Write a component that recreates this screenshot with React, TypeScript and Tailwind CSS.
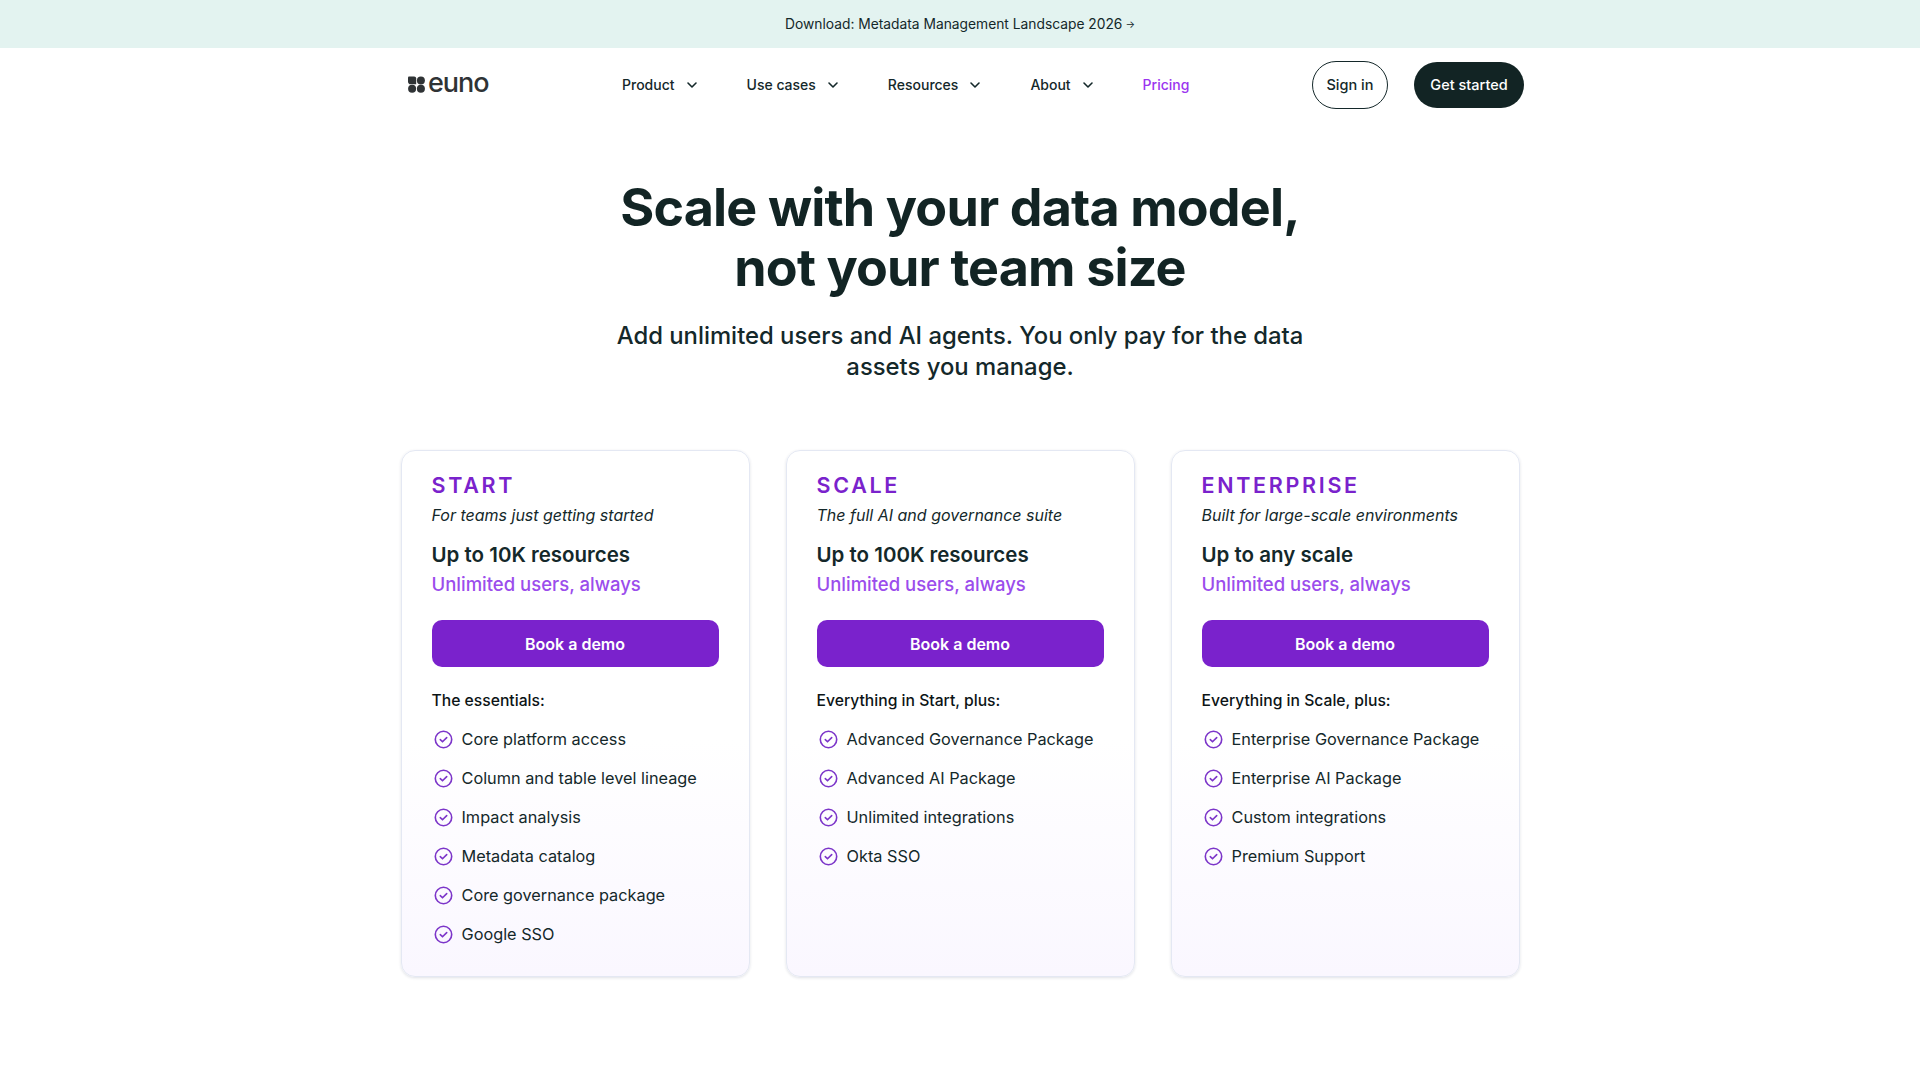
import { ChevronDown } from "lucide-react";

type Plan = {
  name: string;
  tagline: string;
  scale: string;
  intro: string;
  features: string[];
};

const plans: Plan[] = [
  {
    name: "START",
    tagline: "For teams just getting started",
    scale: "Up to 10K resources",
    intro: "The essentials:",
    features: [
      "Core platform access",
      "Column and table level lineage",
      "Impact analysis",
      "Metadata catalog",
      "Core governance package",
      "Google SSO",
    ],
  },
  {
    name: "SCALE",
    tagline: "The full AI and governance suite",
    scale: "Up to 100K resources",
    intro: "Everything in Start, plus:",
    features: ["Advanced Governance Package", "Advanced AI Package", "Unlimited integrations", "Okta SSO"],
  },
  {
    name: "ENTERPRISE",
    tagline: "Built for large-scale environments",
    scale: "Up to any scale",
    intro: "Everything in Scale, plus:",
    features: ["Enterprise Governance Package", "Enterprise AI Package", "Custom integrations", "Premium Support"],
  },
];

const navItems = ["Product", "Use cases", "Resources", "About"];

function CheckIcon() {
  return (
    <svg width="19" height="19" viewBox="0 0 19 19" fill="none" className="-mt-[1px] shrink-0">
      <circle cx="9.5" cy="9.5" r="8.2" stroke="#7c35c9" strokeWidth="1.6" />
      <path d="M6.3 9.6l2.2 2.2 4.2-4.2" stroke="#7c35c9" strokeWidth="1.6" strokeLinecap="round" strokeLinejoin="round" />
    </svg>
  );
}

function Logo() {
  return (
    <div className="flex items-center gap-[3px] text-[#2f3335]">
      <svg width="17" height="17" viewBox="0 0 17 17" fill="currentColor">
        <path d="M1 0h5.2a2 2 0 0 1 2 2v5.8H2.8A2.8 2.8 0 0 1 0 5V1a1 1 0 0 1 1-1z" transform="translate(0 .4)" />
        <circle cx="12.9" cy="4.4" r="4" />
        <circle cx="4.1" cy="12.8" r="4" />
        <circle cx="12.9" cy="12.8" r="4" />
      </svg>
      <span className="-mt-[4px] text-[27px] leading-none font-medium tracking-[-1px]">euno</span>
    </div>
  );
}

function PlanCard({ plan }: { plan: Plan }) {
  return (
    <div className="h-[527px] w-[349px] rounded-[14px] border border-[#e4e8f3] bg-gradient-to-b from-white from-55% to-[#faf7ff] px-[30px] pt-[20px] shadow-[0_1px_3px_rgba(30,40,80,0.14)]">
      <p className="text-[21.5px] leading-[28px] font-semibold tracking-[0.125em] text-[#7a22cc]">{plan.name}</p>
      <p className="mt-[3px] text-[16px] leading-[26px] italic text-[#14282a]">{plan.tagline}</p>
      <p className="mt-[12px] text-[20.5px] leading-[30px] font-semibold text-[#14282a]">{plan.scale}</p>
      <p className="text-[18.5px] leading-[28px] font-medium text-[#9b4dec]">Unlimited users, always</p>
      <button
        type="button"
        className="mt-[22px] h-[47px] w-full rounded-[10px] bg-[#7a22cc] text-[16px] font-semibold text-white"
      >
        Book a demo
      </button>
      <p className="mt-[22px] text-[15.7px] leading-[24px] font-medium text-[#0c1416]">{plan.intro}</p>
      <ul className="mt-[7px]">
        {plan.features.map((feature) => (
          <li key={feature} className="flex h-[39px] items-center gap-[9px] pl-[2px] text-[16.3px] text-[#14282a]">
            <CheckIcon />
            {feature}
          </li>
        ))}
      </ul>
    </div>
  );
}

export default function App() {
  return (
    <div className="min-h-[1080px] bg-white font-['Inter',sans-serif] text-[#14282a]">
      <div className="flex h-[48px] items-center justify-center gap-[3px] bg-[#e3f3f0] text-[13.8px] text-[#14282a]">
        Download: Metadata Management Landscape 2026
        <span className="text-[10px]">→</span>
      </div>
      <nav className="ml-[408px] flex h-[72px] w-[1116px] items-center pt-[1px]">
        <div className="w-[214px]">
          <Logo />
        </div>
        <div className="flex items-center gap-[47px] text-[14px] font-medium">
          {navItems.map((item) => (
            <span key={item} className="flex items-center gap-[9px]">
              {item}
              <ChevronDown size={16} strokeWidth={2.4} />
            </span>
          ))}
          <span className="text-[#9b35ef]">Pricing</span>
        </div>
        <div className="ml-auto flex items-center gap-[26px] text-[14.5px] font-medium">
          <span className="flex h-[48px] w-[76px] items-center justify-center rounded-[24px] border border-[#14282a]">
            Sign in
          </span>
          <span className="flex h-[46px] w-[110px] items-center justify-center rounded-[23px] bg-[#122424] text-white">
            Get started
          </span>
        </div>
      </nav>
      <div className="mt-[58px] text-center">
        <h1 className="text-[52px] leading-[60px] font-bold tracking-[-0.85px] text-[#122424]">
          Scale with your data model,
          <br />
          not your team size
        </h1>
        <p className="mx-auto mt-[22px] w-[720px] text-[23.85px] leading-[31px] font-medium">
          Add unlimited users and AI agents. You only pay for the data
          <br />
          assets you manage.
        </p>
      </div>
      <div className="mt-[68px] flex justify-center gap-[36px]">
        {plans.map((plan) => (
          <PlanCard key={plan.name} plan={plan} />
        ))}
      </div>
    </div>
  );
}
